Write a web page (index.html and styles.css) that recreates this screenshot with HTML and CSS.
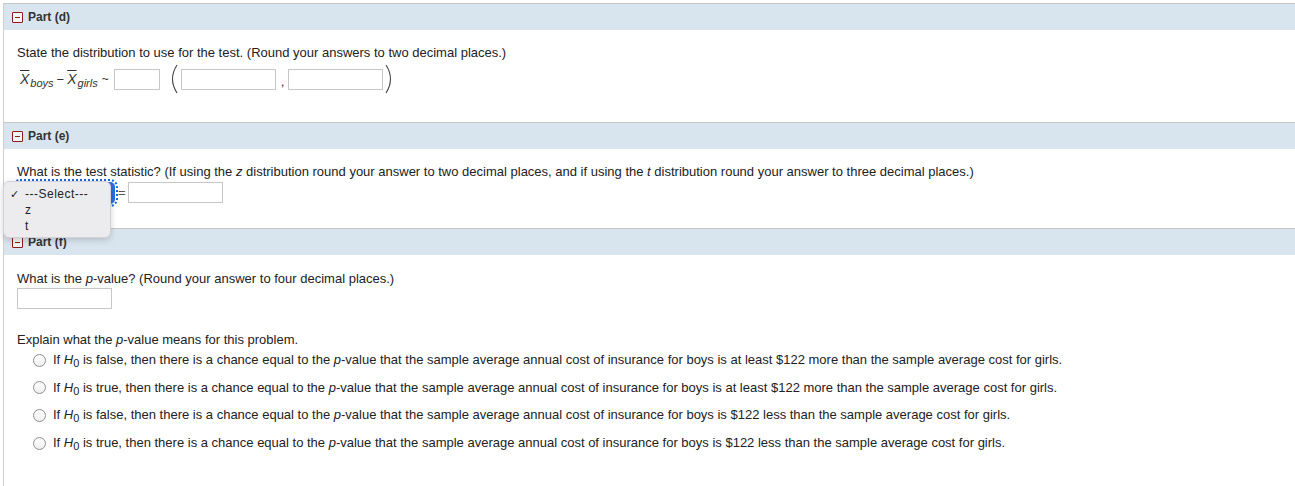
FILE: index.html
```html
<!DOCTYPE html>
<html>
<head>
<meta charset="utf-8">
<link rel="stylesheet" href="styles.css">
</head>
<body>
<div class="page">
  <section class="part">
    <div class="part-head"><span class="toggle"></span><span class="part-title">Part (d)</span></div>
    <div class="part-body body-d">
      <p class="line">State the distribution to use for the test. (Round your answers to two decimal places.)</p>
      <div class="formula">
        <span class="xbar">X</span><sub class="sub">boys</sub>
        <span class="minus">&minus;</span>
        <span class="xbar">X</span><sub class="sub">girls</sub>
        <span class="tilde">~</span>
        <span class="input small"></span>
        <svg class="paren" width="12" height="30" viewBox="0 0 12 30"><path d="M10 1 Q1 15 10 29" fill="none" stroke="#444" stroke-width="1.1"/></svg>
        <span class="input"></span>
        <span class="comma">,</span>
        <span class="input"></span>
        <svg class="paren" width="12" height="30" viewBox="0 0 12 30"><path d="M2 1 Q11 15 2 29" fill="none" stroke="#444" stroke-width="1.1"/></svg>
      </div>
    </div>
  </section>

  <section class="part">
    <div class="part-head"><span class="toggle"></span><span class="part-title">Part (e)</span></div>
    <div class="part-body body-e">
      <p class="line">What is the test statistic? (If using the <i>z</i> distribution round your answer to two decimal places, and if using the <i>t</i> distribution round your answer to three decimal places.)</p>
      <div class="stat-row">
        <div class="select-wrap">
          <div class="select"><span class="select-btn"></span></div>
          <div class="menu">
            <div class="menu-item checked"><span class="check">✓</span>---Select---</div>
            <div class="menu-item">z</div>
            <div class="menu-item">t</div>
          </div>
        </div>
        <span class="eq">=</span>
        <span class="input"></span>
      </div>
    </div>
  </section>

  <section class="part">
    <div class="part-head"><span class="toggle"></span><span class="part-title">Part (f)</span></div>
    <div class="part-body body-f">
      <p class="line">What is the <i>p</i>-value? (Round your answer to four decimal places.)</p>
      <div class="pval-row"><span class="input"></span></div>
      <p class="line explain">Explain what the <i>p</i>-value means for this problem.</p>
      <div class="options">
        <div class="option"><span class="radio"></span><span>If <i>H</i><sub class="h0">0</sub> is false, then there is a chance equal to the <i>p</i>-value that the sample average annual cost of insurance for boys is at least $122 more than the sample average cost for girls.</span></div>
        <div class="option"><span class="radio"></span><span>If <i>H</i><sub class="h0">0</sub> is true, then there is a chance equal to the <i>p</i>-value that the sample average annual cost of insurance for boys is at least $122 more than the sample average cost for girls.</span></div>
        <div class="option"><span class="radio"></span><span>If <i>H</i><sub class="h0">0</sub> is false, then there is a chance equal to the <i>p</i>-value that the sample average annual cost of insurance for boys is $122 less than the sample average cost for girls.</span></div>
        <div class="option"><span class="radio"></span><span>If <i>H</i><sub class="h0">0</sub> is true, then there is a chance equal to the <i>p</i>-value that the sample average annual cost of insurance for boys is $122 less than the sample average cost for girls.</span></div>
      </div>
    </div>
  </section>
</div>
</body>
</html>
```

FILE: styles.css
```css
* { box-sizing: border-box; }
html, body {
  margin: 0;
  padding: 0;
  background: #fff;
}
body {
  font-family: "Liberation Sans", Arial, sans-serif;
  font-size: 13px;
  color: #222;
  padding-top: 3px;
}
.page {
  margin-left: 3px;
  border-left: 1px solid #cfcfcf;
  min-height: 483px;
}
.part-head {
  border-top: 1px solid #c6c6c6;
  height: 27px;
  background: #d9e5ee;
  display: flex;
  align-items: center;
  padding-left: 8px;
  gap: 5px;
}
.toggle {
  width: 11px;
  height: 11px;
  border: 1px solid #8b1a1a;
  position: relative;
  background: #f4f4f4;
  border-radius: 1px;
}
.toggle::after {
  content: "";
  position: absolute;
  left: 2px;
  right: 2px;
  top: 4px;
  height: 1px;
  background: #8b1a1a;
}
.part-title {
  font-weight: bold;
  font-size: 12px;
  color: #333;
}
.part-body {
  padding-left: 13px;
}
.line {
  margin: 0;
  line-height: 16px;
}
.body-d { padding-top: 15px; padding-bottom: 27px; }
.formula {
  margin-top: 2px;
  height: 32px;
  display: flex;
  align-items: center;
  padding-left: 3px;
}
.xbar {
  font-style: italic;
  font-size: 14px;
  text-decoration: overline;
  color: #333;
}
.sub {
  font-style: italic;
  font-size: 11px;
  position: relative;
  top: 4px;
  vertical-align: baseline;
  margin-left: 1px;
  color: #333;
}
.minus { margin: 0 3px; color: #333; }
.tilde { margin: 0 5px 0 4px; color: #333; font-size: 12px; }
.input {
  display: inline-block;
  width: 95px;
  height: 21px;
  border: 1px solid #c7c7c7;
  background: #fff;
}
.input.small { width: 46px; }
.paren { margin: 0 3px 0 7px; }
.paren:last-child { margin: 0 0 0 1px; }
.comma { margin: 4px 4px 0 5px; color: #333; }
.formula .paren + .input { margin-left: -1px; }

.body-e { padding-top: 15px; padding-bottom: 25px; }
.stat-row {
  margin-top: 2px;
  height: 21px;
  display: flex;
  align-items: center;
}
.select-wrap {
  position: relative;
  width: 97px;
  height: 21px;
}
.select {
  position: absolute;
  left: -2px;
  top: 0;
  width: 100px;
  height: 22px;
  border-radius: 5px;
  background: #fff;
  border: 1px solid #c0c0c0;
  outline: 2px dotted #1769d6;
  outline-offset: 1px;
}
.select-btn {
  position: absolute;
  right: -1px;
  top: -1px;
  width: 16px;
  height: 22px;
  border-radius: 0 5px 5px 0;
  background: #2d6ee0;
}
.menu {
  position: absolute;
  left: -14px;
  top: -1px;
  width: 108px;
  height: 57px;
  background: #ececef;
  border: 1px solid #d2d2d6;
  border-radius: 6px;
  box-shadow: 0 2px 6px rgba(0,0,0,0.18);
  padding-top: 4px;
  z-index: 5;
  font-size: 12px;
  color: #222;
}
.menu-item {
  height: 16px;
  line-height: 16px;
  padding-left: 21px;
  position: relative;
}
.menu-item.checked { letter-spacing: 0.5px; }
.check {
  position: absolute;
  left: 6px;
  top: 0;
  font-size: 11px;
}
.eq {
  margin: 0 2px 0 4px;
  color: #555;
}

.body-f { padding-top: 16px; padding-bottom: 30px; }
.pval-row {
  margin-top: 1px;
  height: 22px;
  display: flex;
}
.explain { margin-top: 22px; }
.options { margin-top: 4px; }
.option {
  display: flex;
  align-items: center;
  gap: 7px;
  padding-left: 16px;
  line-height: 16px;
  margin-bottom: 11.7px;
}
.radio {
  width: 13px;
  height: 13px;
  border-radius: 50%;
  border: 1px solid #8e8e8e;
  background: linear-gradient(#fdfdfd, #f0f0f0);
  flex: none;
}
.h0 {
  font-size: 11px;
  vertical-align: baseline;
  position: relative;
  top: 3px;
  font-style: normal;
}
```
